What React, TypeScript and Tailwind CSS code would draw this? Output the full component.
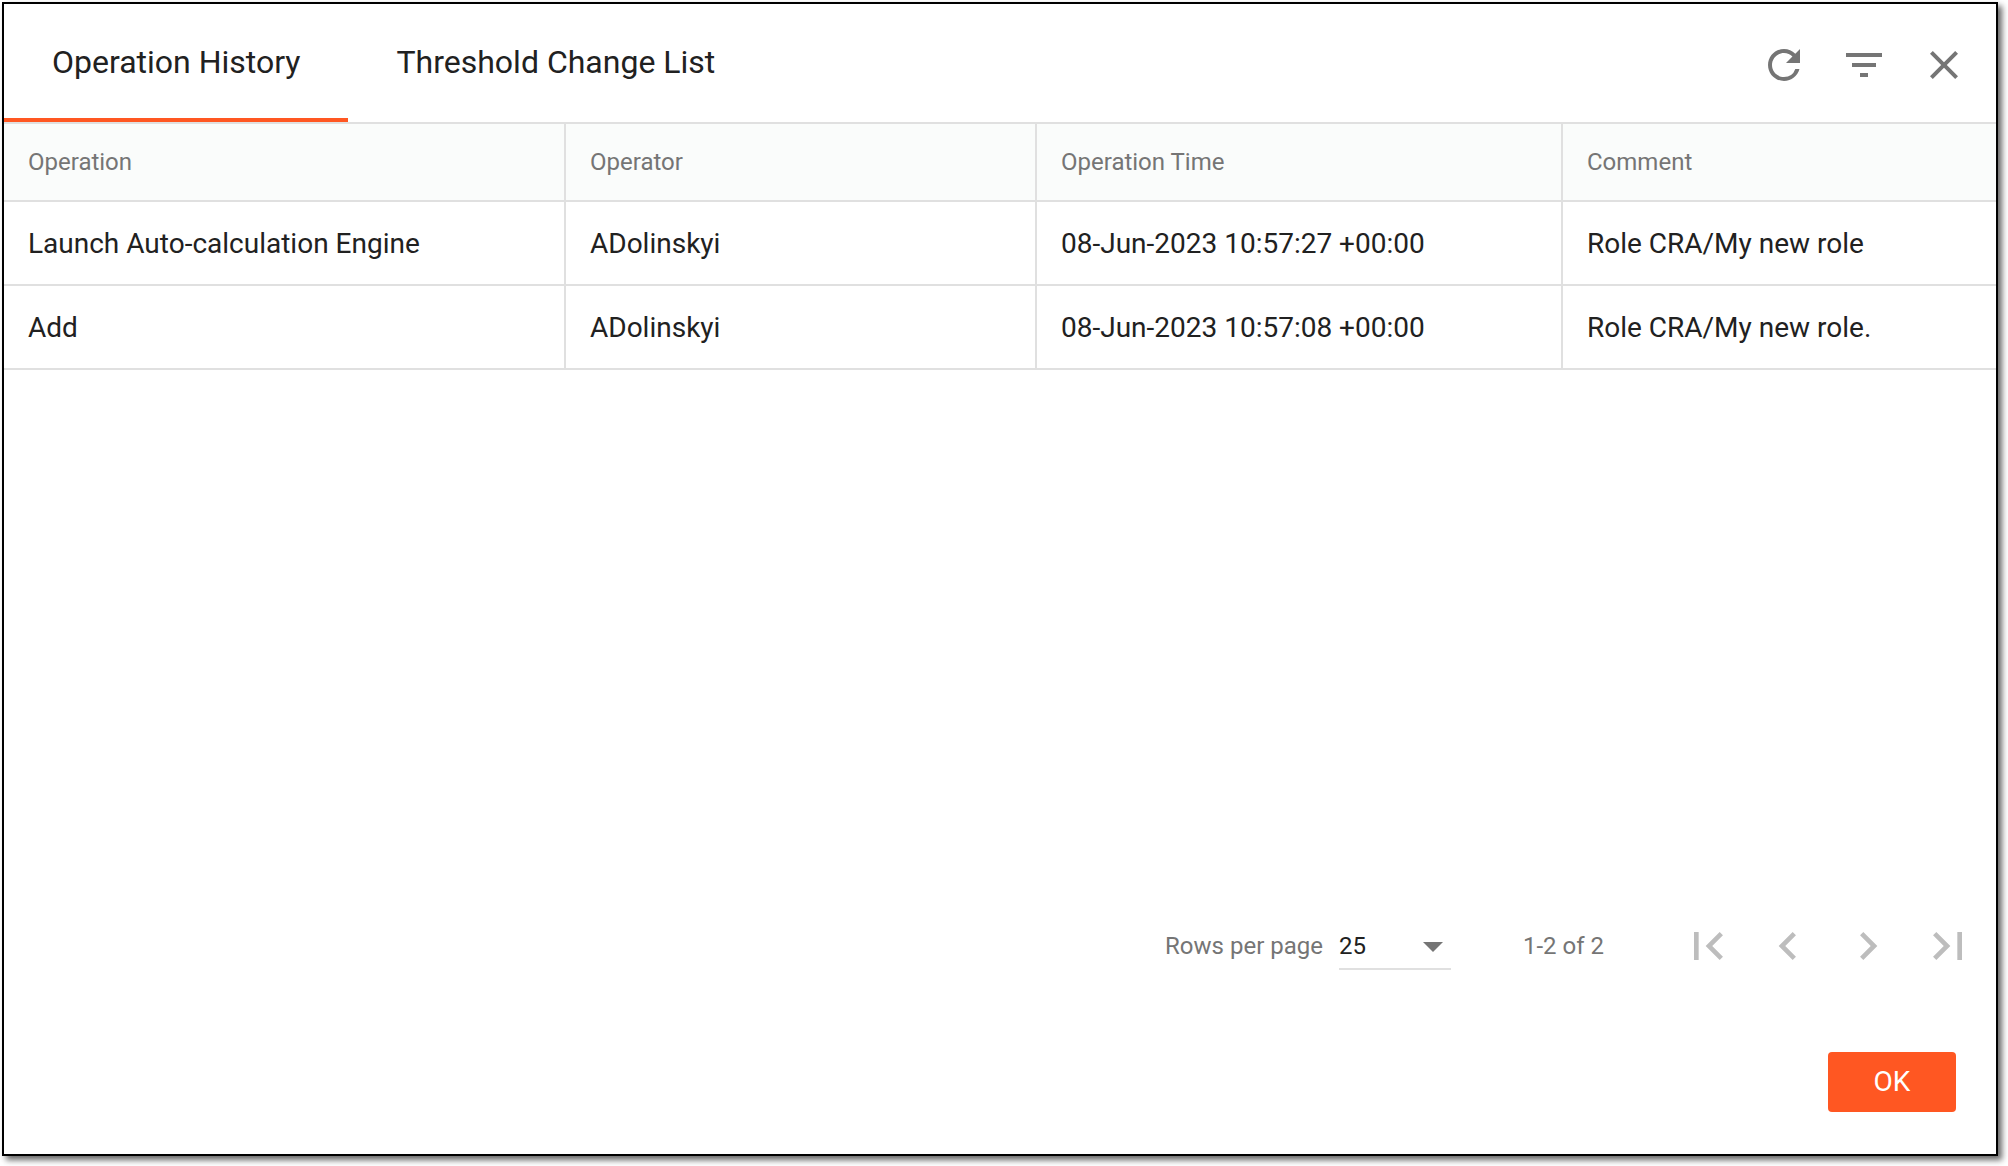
import { useState } from "react";
import {
  MdArrowDropDown,
  MdChevronLeft,
  MdChevronRight,
  MdClose,
  MdFilterList,
  MdFirstPage,
  MdLastPage,
  MdRefresh,
} from "react-icons/md";

interface HistoryRow {
  id: number;
  operation: string;
  operator: string;
  time: string;
  comment: string;
}

const tabs = ["Operation History", "Threshold Change List"];

const rows: HistoryRow[] = [
  {
    id: 1,
    operation: "Launch Auto-calculation Engine",
    operator: "ADolinskyi",
    time: "08-Jun-2023 10:57:27 +00:00",
    comment: "Role CRA/My new role",
  },
  {
    id: 2,
    operation: "Add",
    operator: "ADolinskyi",
    time: "08-Jun-2023 10:57:08 +00:00",
    comment: "Role CRA/My new role.",
  },
];

const headCls = "h-[78px] px-6 text-left text-2xl font-normal text-[#757575] bg-[#fafcfb] border-b-2 border-r-2 border-[#e0e0e0] last:border-r-0";
const cellCls = "h-[84px] px-6 pt-0.5 text-[28px] border-b-2 border-r-2 border-[#e0e0e0] last:border-r-0";

export default function App() {
  const [activeTab, setActiveTab] = useState(0);
  const [pageSize, setPageSize] = useState("25");

  return (
    <div className="min-h-screen flex bg-white pt-0.5 pl-0.5 pr-2.5 pb-2.5 font-['Roboto','Liberation_Sans',sans-serif] text-[#212121]">
      <div role="dialog" aria-label="History" className="flex-1 flex flex-col bg-white border-2 border-black shadow-[4px_4px_6px_rgba(0,0,0,0.6)]">
        {/* Tabs and actions */}
        <header className="flex items-stretch justify-between border-b-2 border-[#e0e0e0]">
          <div role="tablist" className="flex">
            {tabs.map((tab, i) => (
              <button
                key={tab}
                role="tab"
                aria-selected={activeTab === i}
                onClick={() => setActiveTab(i)}
                className={`h-[118px] px-12 pt-0.5 text-[32px] border-b-4 ${activeTab === i ? "border-[#ff5722]" : "border-transparent"}`}
              >
                {tab}
              </button>
            ))}
          </div>
          <div className="flex items-center gap-8 pt-1 pr-7 text-[#757575]">
            <button aria-label="Refresh"><MdRefresh className="size-12" /></button>
            <button aria-label="Filter"><MdFilterList className="size-12" /></button>
            <button aria-label="Close"><MdClose className="size-12" /></button>
          </div>
        </header>

        <main className="flex-1">
          <table className="w-full table-fixed border-separate border-spacing-0">
            <thead>
              <tr>
                <th className={`${headCls} w-[562px]`}>Operation</th>
                <th className={`${headCls} w-[471px]`}>Operator</th>
                <th className={`${headCls} w-[526px]`}>Operation Time</th>
                <th className={headCls}>Comment</th>
              </tr>
            </thead>
            <tbody>
              {rows.map(row => (
                <tr key={row.id}>
                  <td className={cellCls}>{row.operation}</td>
                  <td className={cellCls}>{row.operator}</td>
                  <td className={cellCls}>{row.time}</td>
                  <td className={cellCls}>{row.comment}</td>
                </tr>
              ))}
            </tbody>
          </table>
        </main>

        {/* Pagination */}
        <div className="flex items-center justify-end pr-5 text-2xl text-[#757575]">
          <label htmlFor="page-size" className="mr-4">Rows per page</label>
          <div className="relative w-28">
            <select
              id="page-size"
              value={pageSize}
              onChange={e => setPageSize(e.target.value)}
              className="w-full h-12 pt-0.5 appearance-none bg-transparent border-b-2 border-[#e0e0e0] text-[#212121] outline-none"
            >
              <option>25</option>
              <option>50</option>
              <option>100</option>
            </select>
            <MdArrowDropDown className="absolute right-[-6px] top-0 size-12 pointer-events-none" />
          </div>
          <span className="ml-18">1-2 of 2</span>
          <div className="ml-19 flex gap-6 text-[#bdbdbd]">
            <button disabled aria-label="First page"><MdFirstPage className="size-14" /></button>
            <button disabled aria-label="Previous page"><MdChevronLeft className="size-14" /></button>
            <button disabled aria-label="Next page"><MdChevronRight className="size-14" /></button>
            <button disabled aria-label="Last page"><MdLastPage className="size-14" /></button>
          </div>
        </div>

        <footer className="flex justify-end pt-[78px] pr-10 pb-[42px]">
          <button className="w-32 h-[60px] rounded bg-[#ff5722] text-[28px] text-white">OK</button>
        </footer>
      </div>
    </div>
  );
}
